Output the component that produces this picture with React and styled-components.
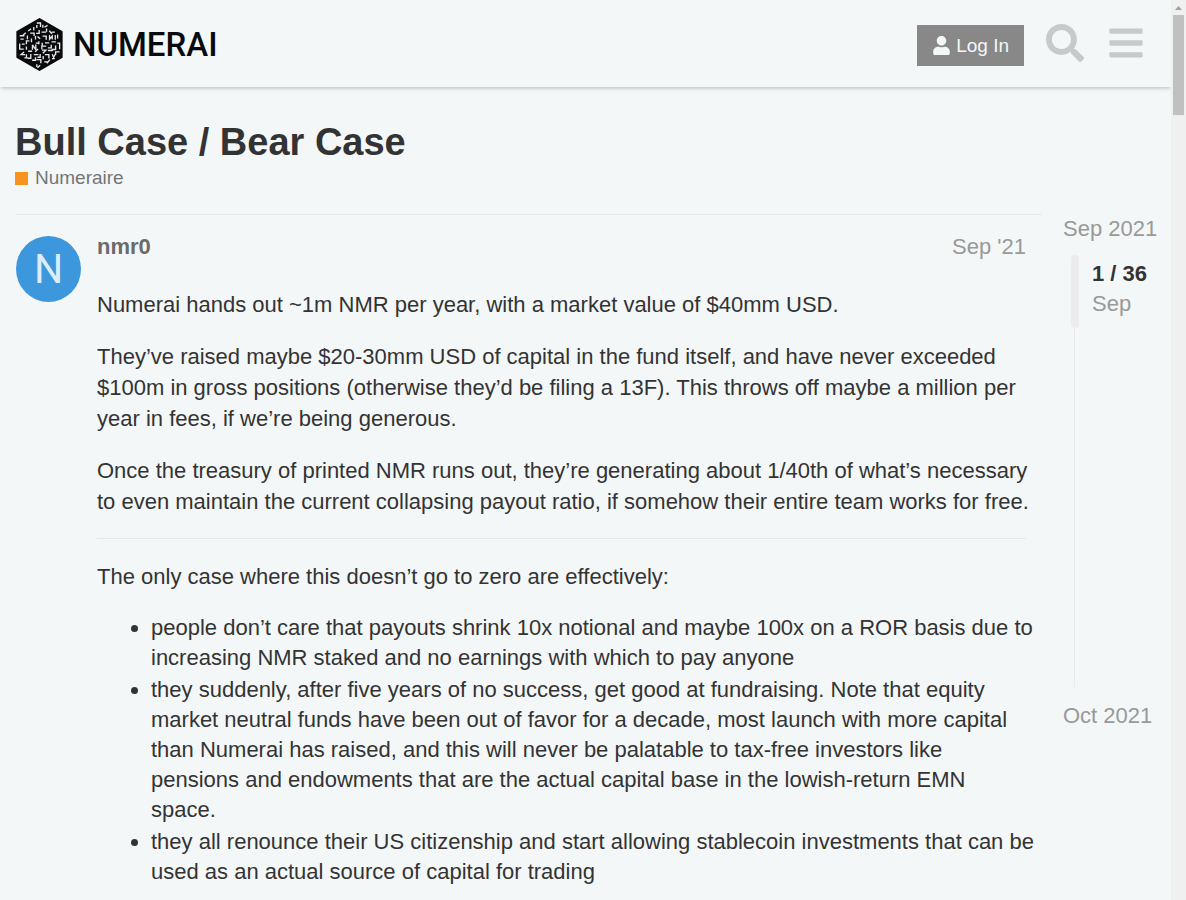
import React from "react";
import styled, { createGlobalStyle } from "styled-components";
import { FaBars, FaSearch, FaUser } from "react-icons/fa";

const GlobalStyle = createGlobalStyle`
  *, *::before, *::after { box-sizing: border-box; }
  body {
    margin: 0;
    background: #f3f7f8;
    color: #333;
    font-family: "Liberation Sans", Arial, sans-serif;
    font-size: 22px;
    line-height: 30px;
  }
`;

const Window = styled.div`
  display: flex;
  height: 100vh;
  overflow: hidden;
`;

const Page = styled.div`
  flex: 1;
  min-width: 0;
`;

const ScrollTrack = styled.div`
  display: flex;
  flex-direction: column;
  align-items: center;
  width: 15px;
  background: #f0f0f0;
`;

const ScrollArrow = styled.svg`
  display: block;
  width: 15px;
  height: 15px;
  fill: #a0a0a0;
`;

const ScrollThumb = styled.div`
  width: 11px;
  height: 100px;
  background: #c0c0c0;
`;

const Header = styled.header`
  display: flex;
  align-items: center;
  justify-content: space-between;
  height: 87px;
  padding: 0 26px 0 16px;
  box-shadow: 0 2px 4px -1px rgba(0, 0, 0, 0.25);
`;

const Logo = styled.a`
  display: flex;
  align-items: center;
  gap: 10px;
  height: 53px;
  margin-top: 2px;
  color: #090a0b;
  text-decoration: none;
`;

const LogoMark = styled.svg`
  width: 47px;
  height: 53px;
`;

const LogoText = styled.span`
  font-family: Roboto, sans-serif;
  font-size: 33px;
  font-weight: 500;
`;

const HeaderActions = styled.nav`
  display: flex;
  align-items: center;
`;

const LoginButton = styled.button`
  display: flex;
  align-items: center;
  gap: 5px;
  height: 41px;
  margin: 4px 22px 0 0;
  padding: 0 15px;
  border: 0;
  background: #888;
  color: #f3f7f8;
  font: 19px "Liberation Sans", Arial, sans-serif;
`;

const HeaderIcons = styled.div`
  display: flex;
  gap: 23px;
  padding-bottom: 2px;
`;

const IconButton = styled.button`
  display: flex;
  padding: 0;
  border: 0;
  background: none;
  color: #c8c9ca;
  font-size: 38px;
`;

const Main = styled.main`
  padding: 30px 15px 0;
`;

const Title = styled.h1`
  margin: 0;
  font-size: 38px;
  line-height: 50px;
`;

const Category = styled.a`
  display: flex;
  align-items: center;
  gap: 7px;
  height: 22px;
  color: #757575;
  font-size: 19px;
  line-height: 22px;
  text-decoration: none;

  &::before {
    content: "";
    width: 13px;
    height: 13px;
    background: #f7941d;
  }
`;

const Columns = styled.div`
  display: flex;
  gap: 21px;
  margin-top: 25px;
`;

const Post = styled.article`
  display: flex;
  flex: 1;
  gap: 16px;
  min-width: 0;
  padding: 21px 16px 0 1px;
  border-top: 1px solid #e9e9e9;
`;

const Avatar = styled.a`
  display: flex;
  flex: none;
  align-items: center;
  justify-content: center;
  width: 65px;
  height: 66px;
  border-radius: 50%;
  background: #3d97dd;
  color: #dcecf9;
  font-family: Roboto, sans-serif;
  font-size: 41px;
  text-decoration: none;
`;

const PostBody = styled.div`
  flex: 1;
  min-width: 0;
`;

const PostMeta = styled.div`
  display: flex;
  justify-content: space-between;
  height: 22px;
  line-height: 22px;
`;

const Author = styled.a`
  color: #6b6b6b;
  font-weight: 700;
  text-decoration: none;
`;

const PostDate = styled.a`
  color: #999;
  text-decoration: none;
`;

const Prose = styled.div`
  margin-right: -9px;
  padding-top: 31px;

  p {
    margin: 0 0 21px;
    line-height: 31px;
  }

  hr {
    height: 1px;
    margin: 0 9px 22px 0;
    border: 0;
    background: #e6e8e9;
  }

  ul {
    margin: 0;
    padding-left: 54px;
  }

  li {
    margin-bottom: 2px;
  }
`;

const Timeline = styled.aside`
  flex: none;
  width: 93px;
  color: #999;
`;

const TimelineDate = styled.a`
  display: block;
  color: #999;
  white-space: nowrap;
  text-decoration: none;
`;

const TimelineTrack = styled.div`
  height: 432px;
  margin: 11px 0 14px 11px;
  border-left: 1px solid #e9e9e9;
`;

const TimelineHandle = styled.div`
  display: flex;
  gap: 13px;
  height: 73px;
  margin-left: -4px;
  white-space: nowrap;

  &::before {
    content: "";
    width: 8px;
    border-radius: 4px;
    background: #ececec;
  }
`;

const TimelinePosition = styled.div`
  padding-top: 4px;

  strong {
    display: block;
    color: #333;
  }
`;

const NumeraiMark = () => (
  <LogoMark viewBox="0 0 140 158" aria-hidden="true">
    <path
      d="M70 3 136 41V117L70 155 4 117V41Z"
      fill="#090a0b"
      stroke="#090a0b"
      strokeWidth="6"
      strokeLinejoin="round"
    />
    <path
      d="M62 15h11v12M62 21v9M53 27v10M45 32l-9 7M80 20v9M85 27l9-5M91 31v10M69 36v10h-9M42 45h12v9M29 44l-9 8M34 52v11M76 42h14M99 38l8 9M106 42h10M100 51v12l8-9v10M117 51v14M124 49v12M11 53h14M13 63h10M46 61v11M58 54v10M64 55l8 7M79 54h11v11M68 69v9M40 68h-9v10M11 76v17h12M17 78h9M49 80v15M49 80l10 14v-15M68 75h-9M78 74v8M86 74h13M90 84h-13v9M106 71h13M123 75h7v18M105 80v9h-10M118 82v12h-12M31 85v10M36 99h12M24 101l-9 8h12M66 92l-9 9M77 96h12l-9 9M95 97h15M130 101h-12v9M31 108v13M44 107v13h-9M53 109h14M72 107v10h-8M81 113v10M86 109h12v12M108 108l4 9 5-9M25 119h10M48 126h10v-9M61 124h13v11M84 131h12M101 124l-9 11M107 121h9M62 138v8M72 141l-8 7"
      fill="none"
      stroke="#e6e9ea"
      strokeWidth="4"
    />
  </LogoMark>
);

export default function App() {
  return (
    <>
      <GlobalStyle />
      <Window>
        <Page>
          <Header>
            <Logo href="#" aria-label="Numerai home">
              <NumeraiMark />
              <LogoText>NUMERAI</LogoText>
            </Logo>
            <HeaderActions>
              <LoginButton type="button">
                <FaUser width="17" height="19" />
                Log In
              </LoginButton>
              <HeaderIcons>
                <IconButton type="button" aria-label="Search">
                  <FaSearch />
                </IconButton>
                <IconButton type="button" aria-label="Menu">
                  <FaBars />
                </IconButton>
              </HeaderIcons>
            </HeaderActions>
          </Header>
          <Main>
            <Title>Bull Case / Bear Case</Title>
            <Category href="#">Numeraire</Category>
            <Columns>
              <Post>
                <Avatar href="#">N</Avatar>
                <PostBody>
                  <PostMeta>
                    <Author href="#">nmr0</Author>
                    <PostDate href="#">Sep '21</PostDate>
                  </PostMeta>
                  <Prose>
                    <p>Numerai hands out ~1m NMR per year, with a market value of $40mm USD.</p>
                    <p>
                      They’ve raised maybe $20-30mm USD of capital in the fund itself, and have never
                      exceeded $100m in gross positions (otherwise they’d be filing a 13F). This throws
                      off maybe a million per year in fees, if we’re being generous.
                    </p>
                    <p>
                      Once the treasury of printed NMR runs out, they’re generating about 1/40th of
                      what’s necessary to even maintain the current collapsing payout ratio, if somehow
                      their entire team works for free.
                    </p>
                    <hr />
                    <p>The only case where this doesn’t go to zero are effectively:</p>
                    <ul>
                      <li>
                        people don’t care that payouts shrink 10x notional and maybe 100x on a ROR basis
                        due to increasing NMR staked and no earnings with which to pay anyone
                      </li>
                      <li>
                        they suddenly, after five years of no success, get good at fundraising. Note
                        that equity market neutral funds have been out of favor for a decade, most
                        launch with more capital than Numerai has raised, and this will never be
                        palatable to tax-free investors like pensions and endowments that are the actual
                        capital base in the lowish-return EMN space.
                      </li>
                      <li>
                        they all renounce their US citizenship and start allowing stablecoin investments
                        that can be used as an actual source of capital for trading
                      </li>
                    </ul>
                  </Prose>
                </PostBody>
              </Post>
              <Timeline>
                <TimelineDate href="#">Sep 2021</TimelineDate>
                <TimelineTrack>
                  <TimelineHandle>
                    <TimelinePosition>
                      <strong>1 / 36</strong>
                      Sep
                    </TimelinePosition>
                  </TimelineHandle>
                </TimelineTrack>
                <TimelineDate href="#">Oct 2021</TimelineDate>
              </Timeline>
            </Columns>
          </Main>
        </Page>
        <ScrollTrack aria-hidden="true">
          <ScrollArrow viewBox="0 0 15 15">
            <path d="M4 10 7.5 6 11 10Z" />
          </ScrollArrow>
          <ScrollThumb />
        </ScrollTrack>
      </Window>
    </>
  );
}
